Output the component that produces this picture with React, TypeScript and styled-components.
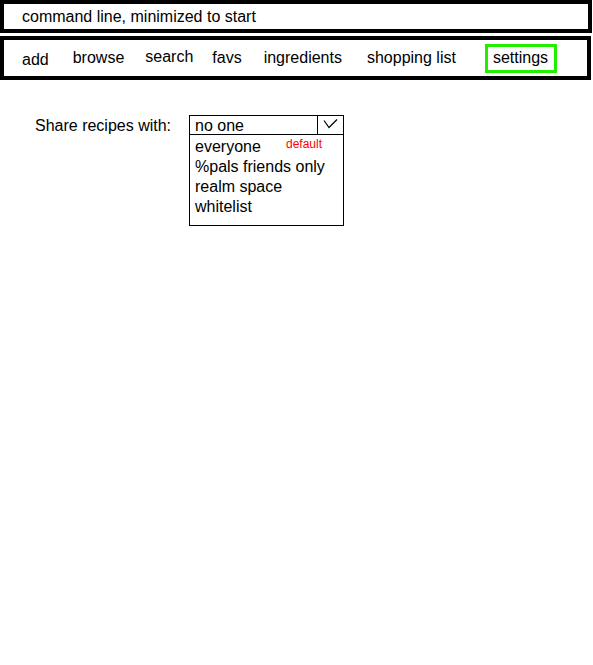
import React from "react";
import styled, { createGlobalStyle, css } from "styled-components";

const Global = createGlobalStyle`
    body {
        margin: 0;
        background: #fff;
        font-family: "Liberation Sans", Arial, sans-serif;
        color: #000;
    }
`;

const Page = styled.div`
    width: 593px;
    height: 665px;
    box-sizing: border-box;
    padding: 0 1px 0 0;
    font-size: 16px;
`;

const CommandBar = styled.div`
    height: 33px;
    box-sizing: border-box;
    border: 4px solid #000;
    padding: 1px 0 0 18px;
    display: flex;
    align-items: center;
`;

const NavBar = styled.nav`
    margin-top: 3px;
    margin-right: 1px;
    height: 44px;
    box-sizing: border-box;
    border: 4px solid #000;
    display: flex;
    align-items: center;
    padding-left: 18px;
`;

const NavItem = styled.span<{ $left: number; $dy: number; $active?: boolean }>`
    margin-left: ${({ $left }) => $left}px;
    position: relative;
    top: ${({ $dy }) => $dy}px;
    white-space: nowrap;
    line-height: 18px;
    ${({ $active }) =>
        $active &&
        css`
            border: 3px solid #22ee00;
            padding: 2px 6px 3px 5px;
        `};
`;

const SettingsRow = styled.div`
    display: flex;
    align-items: flex-start;
    padding: 35px 0 0 35px;
`;

const Label = styled.div`
    width: 154px;
    padding-top: 2px;
    line-height: 18px;
`;

const Select = styled.div`
    width: 155px;
    height: 111px;
    box-sizing: border-box;
    border: 1px solid #000;
`;

const SelectHead = styled.div`
    display: flex;
    height: 18px;
    border-bottom: 1px solid #000;
`;

const SelectValue = styled.div`
    flex: 1;
    padding: 1px 0 0 5px;
    line-height: 18px;
`;

const Arrow = styled.div`
    width: 25px;
    border-left: 1px solid #000;
    display: flex;
    justify-content: center;
    align-items: flex-start;
    padding-top: 3px;
`;

const Options = styled.div`
    padding: 2px 0 0 5px;
`;

const Option = styled.div`
    line-height: 20px;
    white-space: nowrap;
    position: relative;
`;

const Note = styled.span`
    position: absolute;
    left: 91px;
    top: 0;
    line-height: 14px;
    color: #ff0000;
    font-size: 12px;
`;

const navItems = [
    { label: "add", left: 0, dy: 2 },
    { label: "browse", left: 24, dy: 0 },
    { label: "search", left: 21, dy: -1 },
    { label: "favs", left: 19, dy: 0 },
    { label: "ingredients", left: 22, dy: 0 },
    { label: "shopping list", left: 25, dy: 0 },
    { label: "settings", left: 29, dy: 0, active: true },
];

const App: React.FC = () => {
    return (
        <Page>
            <Global />
            <CommandBar>command line, minimized to start</CommandBar>
            <NavBar>
                {navItems.map((n) => (
                    <NavItem key={n.label} $left={n.left} $dy={n.dy} $active={n.active}>
                        {n.label}
                    </NavItem>
                ))}
            </NavBar>
            <SettingsRow>
                <Label>Share recipes with:</Label>
                <Select>
                    <SelectHead>
                        <SelectValue>no one</SelectValue>
                        <Arrow>
                            <svg width="15" height="10" viewBox="0 0 15 10">
                                <path d="M1 1.5 L6 8.5 L14 0.5" fill="none" stroke="#000" strokeWidth="1.2" />
                            </svg>
                        </Arrow>
                    </SelectHead>
                    <Options>
                        <Option>
                            everyone<Note>default</Note>
                        </Option>
                        <Option>%pals friends only</Option>
                        <Option>realm space</Option>
                        <Option>whitelist</Option>
                    </Options>
                </Select>
            </SettingsRow>
        </Page>
    );
};

export default App;
